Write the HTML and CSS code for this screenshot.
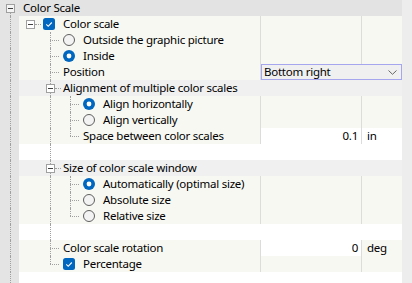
FILE: index.html
```html
<!DOCTYPE html>
<html lang="en">
<head>
  <meta charset="UTF-8" />
  <meta name="viewport" content="width=device-width, initial-scale=1.0"/>
  <title>Color Scale</title>
  <link rel="stylesheet" href="styles.css">
</head>
<body>
  <div class="screen">
    <div class="grid">

      <div class="row head wide">
        <div class="tree">
          <span class="s g x down"><span class="box"></span></span>
          <span class="item">Color Scale</span>
        </div>
      </div>

      <div class="row">
        <div class="tree">
          <span class="s g v"></span>
          <span class="s x h"><span class="box"></span></span>
          <span class="item">
            <span class="ic"><svg width="12" height="12" viewBox="0 0 12 12"><rect width="12" height="12" rx="2.5" fill="#0067c0"/><path d="M3.3 6.4 5.2 8.3 8.8 4.5" fill="none" stroke="#fff" stroke-width="1.1"/></svg></span>
            Color scale
          </span>
        </div>
        <div class="val"></div>
        <div class="unit"></div>
      </div>

      <div class="row">
        <div class="tree">
          <span class="s g v"></span>
          <span class="s"></span>
          <span class="s t"></span>
          <span class="item">
            <span class="ic"><svg width="12" height="12" viewBox="0 0 12 12"><circle cx="6" cy="6" r="5.5" fill="#f3f3f3" stroke="#5e5e5e"/></svg></span>
            Outside the graphic picture
          </span>
        </div>
        <div class="val"></div>
        <div class="unit"></div>
      </div>

      <div class="row">
        <div class="tree">
          <span class="s g v"></span>
          <span class="s"></span>
          <span class="s t"></span>
          <span class="item">
            <span class="ic"><svg width="12" height="12" viewBox="0 0 12 12"><circle cx="6" cy="6" r="6" fill="#0067c0"/><circle cx="6" cy="6" r="2.4" fill="#fff"/></svg></span>
            Inside
          </span>
        </div>
        <div class="val"></div>
        <div class="unit"></div>
      </div>

      <div class="row">
        <div class="tree">
          <span class="s g v"></span>
          <span class="s"></span>
          <span class="s t"></span>
          <span class="item">Position</span>
        </div>
        <div class="combo-cell">
          <div class="combo">
            <span>Bottom right</span>
            <svg width="9" height="5" viewBox="0 0 9 5"><path d="M0.5 0.5 4.5 4.3 8.5 0.5" fill="none" stroke="#666" stroke-width="1"/></svg>
          </div>
        </div>
      </div>

      <div class="row wide group">
        <div class="tree">
          <span class="s g v"></span>
          <span class="s"></span>
          <span class="s x v h"><span class="box"></span></span>
          <span class="item">Alignment of multiple color scales</span>
        </div>
      </div>

      <div class="row">
        <div class="tree">
          <span class="s g v"></span>
          <span class="s"></span>
          <span class="s v"></span>
          <span class="s t"></span>
          <span class="item">
            <span class="ic"><svg width="12" height="12" viewBox="0 0 12 12"><circle cx="6" cy="6" r="6" fill="#0067c0"/><circle cx="6" cy="6" r="2.4" fill="#fff"/></svg></span>
            Align horizontally
          </span>
        </div>
        <div class="val"></div>
        <div class="unit"></div>
      </div>

      <div class="row">
        <div class="tree">
          <span class="s g v"></span>
          <span class="s"></span>
          <span class="s v"></span>
          <span class="s t"></span>
          <span class="item">
            <span class="ic"><svg width="12" height="12" viewBox="0 0 12 12"><circle cx="6" cy="6" r="5.5" fill="#f3f3f3" stroke="#5e5e5e"/></svg></span>
            Align vertically
          </span>
        </div>
        <div class="val"></div>
        <div class="unit"></div>
      </div>

      <div class="row">
        <div class="tree">
          <span class="s g v"></span>
          <span class="s"></span>
          <span class="s v"></span>
          <span class="s l"></span>
          <span class="item">Space between color scales</span>
        </div>
        <div class="val w">0.1</div>
        <div class="unit w">in</div>
      </div>

      <div class="row wide blank">
        <div class="tree">
          <span class="s g v"></span>
          <span class="s"></span>
          <span class="s v"></span>
        </div>
      </div>

      <div class="row wide group">
        <div class="tree">
          <span class="s g v"></span>
          <span class="s"></span>
          <span class="s x v h"><span class="box"></span></span>
          <span class="item">Size of color scale window</span>
        </div>
      </div>

      <div class="row">
        <div class="tree">
          <span class="s g v"></span>
          <span class="s"></span>
          <span class="s v"></span>
          <span class="s t"></span>
          <span class="item">
            <span class="ic"><svg width="12" height="12" viewBox="0 0 12 12"><circle cx="6" cy="6" r="6" fill="#0067c0"/><circle cx="6" cy="6" r="2.4" fill="#fff"/></svg></span>
            Automatically (optimal size)
          </span>
        </div>
        <div class="val"></div>
        <div class="unit"></div>
      </div>

      <div class="row">
        <div class="tree">
          <span class="s g v"></span>
          <span class="s"></span>
          <span class="s v"></span>
          <span class="s t"></span>
          <span class="item">
            <span class="ic"><svg width="12" height="12" viewBox="0 0 12 12"><circle cx="6" cy="6" r="5.5" fill="#f3f3f3" stroke="#5e5e5e"/></svg></span>
            Absolute size
          </span>
        </div>
        <div class="val"></div>
        <div class="unit"></div>
      </div>

      <div class="row">
        <div class="tree">
          <span class="s g v"></span>
          <span class="s"></span>
          <span class="s v"></span>
          <span class="s l"></span>
          <span class="item">
            <span class="ic"><svg width="12" height="12" viewBox="0 0 12 12"><circle cx="6" cy="6" r="5.5" fill="#f3f3f3" stroke="#5e5e5e"/></svg></span>
            Relative size
          </span>
        </div>
        <div class="val"></div>
        <div class="unit"></div>
      </div>

      <div class="row wide blank">
        <div class="tree">
          <span class="s g v"></span>
          <span class="s"></span>
          <span class="s v"></span>
        </div>
      </div>

      <div class="row">
        <div class="tree">
          <span class="s g v"></span>
          <span class="s"></span>
          <span class="s t"></span>
          <span class="item">Color scale rotation</span>
        </div>
        <div class="val w">0</div>
        <div class="unit">deg</div>
      </div>

      <div class="row">
        <div class="tree">
          <span class="s g v"></span>
          <span class="s"></span>
          <span class="s l"></span>
          <span class="item">
            <span class="ic"><svg width="12" height="12" viewBox="0 0 12 12"><rect width="12" height="12" rx="2.5" fill="#0067c0"/><path d="M3.3 6.4 5.2 8.3 8.8 4.5" fill="none" stroke="#fff" stroke-width="1.1"/></svg></span>
            Percentage
          </span>
        </div>
        <div class="val"></div>
        <div class="unit"></div>
      </div>

      <div class="row wide blank fill">
        <div class="tree">
          <span class="s g v"></span>
        </div>
      </div>

    </div>
  </div>
</body>
</html>
```

FILE: styles.css
```css
* {
  box-sizing: border-box;
}

body {
  margin: 0;
  font-family: "Noto Sans", sans-serif;
  font-size: 11.5px;
  letter-spacing: -0.25px;
  color: #000;
  background: #ededed;
}

.screen {
  display: flex;
  height: 100vh;
}

.grid {
  width: 402px;
  display: flex;
  flex-direction: column;
  background: #fff;
}

.row {
  display: flex;
  flex: none;
  height: 16px;
  line-height: 16px;
}

.row.fill {
  flex: 1;
}

.tree {
  display: flex;
  flex: 0 0 260px;
  background: #f8f8f2;
}

.row.wide .tree {
  flex: 1;
}

.row.head .tree {
  background: #e3e3e3;
}

.row.group .tree {
  background: #f0f0f0;
}

.row.blank .tree {
  background: #fff;
}

/* tree slots and connector lines */
.s {
  position: relative;
  display: flex;
  align-items: flex-start;
  flex: 0 0 20px;
}

.s.g {
  flex-basis: 19px;
  background: #e4e4e4;
}

.v::before,
.t::before,
.l::before,
.down::before {
  content: "";
  position: absolute;
  left: 11px;
  top: 0;
  bottom: 0;
  border-left: 1px dotted #a0a0a0;
}

.g.v::before,
.g.down::before {
  left: 10px;
}

.down::before {
  top: 12px;
}

.l::before {
  bottom: auto;
  height: 8px;
}

.t::after,
.l::after,
.h::after {
  content: "";
  position: absolute;
  left: 11px;
  top: 8px;
  width: 9px;
  border-top: 1px dotted #a0a0a0;
}

.h::after {
  left: 16px;
  width: 6px;
}

.box {
  position: relative;
  z-index: 1;
  width: 9px;
  height: 9px;
  margin: 4px 0 0 7px;
  border: 1px solid #a0a0a0;
  background: #fff;
}

.g .box {
  margin-left: 6px;
}

.box::after {
  content: "";
  position: absolute;
  left: 1px;
  top: 3px;
  width: 5px;
  height: 1px;
  background: #404040;
}

.row.head .box {
  background: #f4f4f4;
}

/* item content */
.item {
  display: flex;
  align-items: center;
  padding-left: 4px;
  white-space: nowrap;
}

.ic {
  display: flex;
  flex: 0 0 20px;
}

/* value columns */
.val {
  flex: 0 0 101px;
  border-left: 1px solid #dcdcdc;
  background: #f8f8f2;
  text-align: right;
  padding-right: 3px;
}

.unit {
  flex: 0 0 41px;
  border-left: 1px solid #dcdcdc;
  background: #f8f8f2;
  padding-left: 5px;
}

.val.w,
.unit.w {
  background: #fff;
}

.combo-cell {
  flex: 0 0 142px;
  border-left: 1px solid #dcdcdc;
  background: #f8f8f2;
}

.combo {
  display: flex;
  align-items: center;
  justify-content: space-between;
  width: 141px;
  height: 16px;
  padding: 0 4px 0 2px;
  border: 1px solid #a6a6ee;
  background: #f0f0f0;
  line-height: 14px;
}
```
